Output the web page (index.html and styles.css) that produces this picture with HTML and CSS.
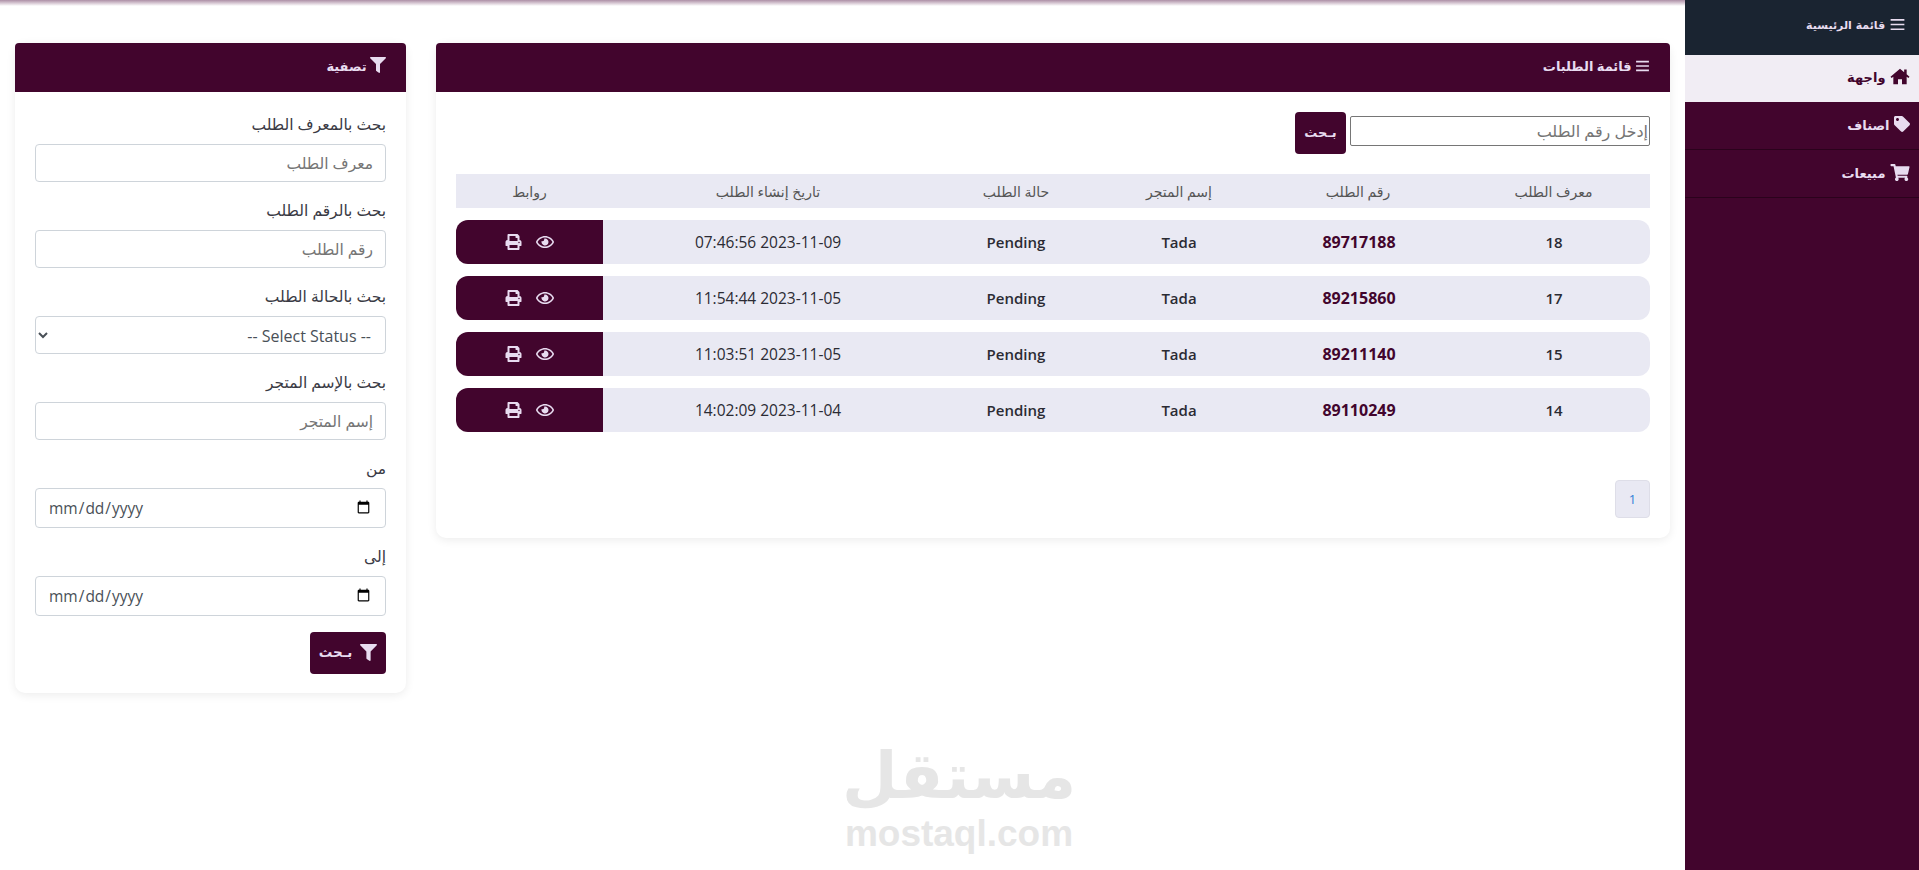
FILE: index.html
```html
<!DOCTYPE html>
<html lang="ar" dir="rtl">
<head>
  <meta charset="UTF-8">
  <title>قائمة الطلبات</title>
  <link rel="stylesheet" href="styles.css">
</head>
<body>
  <svg class="sprite" xmlns="http://www.w3.org/2000/svg">
    <symbol id="i-bars" viewBox="0 0 24 24"><path d="M1 4.5h22M1 12h22M1 19.5h22" stroke="currentColor" stroke-width="2.6" fill="none"/></symbol>
    <symbol id="i-home" viewBox="0 0 24 20"><path fill="currentColor" d="M12 .6 .6 10.4l1.3 1.5L4 10.2V19.4h5.6v-6h4.8v6H20v-9.2l2.1 1.7 1.3-1.5L20 7.4V1.6h-3v3.2z"/></symbol>
    <symbol id="i-tag" viewBox="0 0 512 512"><path fill="currentColor" d="M0 252.118V48C0 21.49 21.49 0 48 0h204.118a48 48 0 0 1 33.941 14.059l211.882 211.882c18.745 18.745 18.745 49.137 0 67.882L293.823 497.941c-18.745 18.745-49.137 18.745-67.882 0L14.059 286.059A48 48 0 0 1 0 252.118zM112 64c-26.51 0-48 21.49-48 48s21.49 48 48 48 48-21.49 48-48-21.49-48-48-48z"/></symbol>
    <symbol id="i-cart" viewBox="0 0 576 512"><path fill="currentColor" d="M528.12 301.319l47.273-208C578.806 78.301 567.391 64 551.99 64H159.208l-9.166-44.81C147.758 8.021 137.93 0 126.529 0H24C10.745 0 0 10.745 0 24v16c0 13.255 10.745 24 24 24h69.883l70.248 343.435C147.325 417.1 136 435.222 136 456c0 30.928 25.072 56 56 56s56-25.072 56-56c0-15.674-6.447-29.835-16.824-40h209.647C430.447 426.165 424 440.326 424 456c0 30.928 25.072 56 56 56s56-25.072 56-56c0-22.172-12.888-41.332-31.579-50.405l5.517-24.276c3.413-15.018-8.002-29.319-23.403-29.319H218.117l-6.545-32h293.145c11.206 0 20.92-7.754 23.403-18.681z"/></symbol>
    <symbol id="i-filter" viewBox="0 0 512 512"><path fill="currentColor" d="M487.976 0H24.028C2.71 0-8.047 25.866 7.058 40.971L192 225.941V432c0 7.831 3.821 15.17 10.237 19.662l80 55.98C298.02 518.69 320 507.493 320 487.98V225.941l184.947-184.97C520.021 25.896 509.338 0 487.976 0z"/></symbol>
    <symbol id="i-print" viewBox="0 0 512 512"><path fill="currentColor" d="M448 192V77.25c0-8.49-3.37-16.62-9.37-22.63L393.37 9.37c-6-6-14.14-9.37-22.63-9.37H96C78.33 0 64 14.33 64 32v160c-35.35 0-64 28.65-64 64v112c0 8.84 7.16 16 16 16h48v96c0 17.67 14.33 32 32 32h320c17.67 0 32-14.33 32-32v-96h48c8.84 0 16-7.16 16-16V256c0-35.35-28.65-64-64-64zm-64 256H128v-96h256v96zm0-224H128V64h192v48c0 8.84 7.16 16 16 16h48v96zm48 72c-13.25 0-24-10.75-24-24 0-13.26 10.75-24 24-24s24 10.74 24 24c0 13.25-10.75 24-24 24z"/></symbol>
    <symbol id="i-eye" viewBox="0 0 576 512"><path fill="currentColor" d="M288 144a110.94 110.94 0 0 0-31.24 5 55.4 55.4 0 0 1 7.24 27 56 56 0 0 1-56 56 55.4 55.4 0 0 1-27-7.24A111.71 111.71 0 1 0 288 144zm284.52 97.4C518.29 135.59 410.93 64 288 64S57.68 135.64 3.48 241.41a32.35 32.35 0 0 0 0 29.19C57.71 376.41 165.07 448 288 448s230.32-71.64 284.52-177.41a32.35 32.35 0 0 0 0-29.19zM288 400c-98.65 0-189.09-55-237.93-144C98.91 167 189.34 112 288 112s189.09 55 237.93 144C477.1 345 386.66 400 288 400z"/></symbol>
  </svg>

  <div class="topline"></div>

  <div class="layout">
    <aside class="sidebar">
      <div class="side-title"><svg class="icon icon-bars"><use href="#i-bars"/></svg> قائمة الرئيسية</div>
      <a class="side-link active"><svg class="icon icon-home"><use href="#i-home"/></svg> واجهة</a>
      <a class="side-link"><svg class="icon"><use href="#i-tag"/></svg> اصناف</a>
      <a class="side-link"><svg class="icon icon-home"><use href="#i-cart"/></svg> مبيعات</a>
    </aside>

    <main class="content">
      <section class="card orders">
        <div class="card-head"><svg class="icon icon-head"><use href="#i-bars"/></svg> قائمة الطلبات</div>
        <div class="card-body">
          <form class="quick-search">
            <input type="text" class="quick-input" placeholder="إدخل رقم الطلب">
            <button type="button" class="btn btn-quick">بـحث</button>
          </form>

          <table class="orders-table">
            <colgroup>
              <col class="c-id"><col class="c-num"><col class="c-store"><col class="c-status"><col class="c-date"><col class="c-links">
            </colgroup>
            <thead>
              <tr><th>معرف الطلب</th><th>رقم الطلب</th><th>إسم المتجر</th><th>حالة الطلب</th><th>تاريخ إنشاء الطلب</th><th>روابط</th></tr>
            </thead>
            <tbody>
              <tr>
                <td>18</td><td class="num">89717188</td><td>Tada</td><td>Pending</td><td class="date">2023-11-09 07:46:56</td>
                <td class="links"><div class="link-icons"><svg class="icon icon-eye"><use href="#i-eye"/></svg><svg class="icon icon-print"><use href="#i-print"/></svg></div></td>
              </tr>
              <tr>
                <td>17</td><td class="num">89215860</td><td>Tada</td><td>Pending</td><td class="date">2023-11-05 11:54:44</td>
                <td class="links"><div class="link-icons"><svg class="icon icon-eye"><use href="#i-eye"/></svg><svg class="icon icon-print"><use href="#i-print"/></svg></div></td>
              </tr>
              <tr>
                <td>15</td><td class="num">89211140</td><td>Tada</td><td>Pending</td><td class="date">2023-11-05 11:03:51</td>
                <td class="links"><div class="link-icons"><svg class="icon icon-eye"><use href="#i-eye"/></svg><svg class="icon icon-print"><use href="#i-print"/></svg></div></td>
              </tr>
              <tr>
                <td>14</td><td class="num">89110249</td><td>Tada</td><td>Pending</td><td class="date">2023-11-04 14:02:09</td>
                <td class="links"><div class="link-icons"><svg class="icon icon-eye"><use href="#i-eye"/></svg><svg class="icon icon-print"><use href="#i-print"/></svg></div></td>
              </tr>
            </tbody>
          </table>

          <div class="pager"><a class="page-num">1</a></div>
        </div>
      </section>

      <section class="card filter">
        <div class="card-head"><svg class="icon"><use href="#i-filter"/></svg> تصفية</div>
        <form class="card-body filter-body">
          <label class="field-label">بحث بالمعرف الطلب</label>
          <input type="text" class="field" placeholder="معرف الطلب">
          <label class="field-label">بحث بالرقم الطلب</label>
          <input type="text" class="field" placeholder="رقم الطلب">
          <label class="field-label">بحث بالحالة الطلب</label>
          <select class="field field-select"><option>-- Select Status --</option></select>
          <label class="field-label">بحث بالإسم المتجر</label>
          <input type="text" class="field" placeholder="إسم المتجر">
          <label class="field-label">من</label>
          <input type="date" class="field field-date">
          <label class="field-label">إلى</label>
          <input type="date" class="field field-date">
          <button type="button" class="btn btn-filter"><svg class="icon"><use href="#i-filter"/></svg> بـحث</button>
        </form>
      </section>
    </main>
  </div>

  <div class="watermark">
    <span class="wm-ar">مستقل</span>
    <span class="wm-en">mostaql.com</span>
  </div>
</body>
</html>
```

FILE: styles.css
```css
* { box-sizing: border-box; }
html, body { height: 100%; }
body {
  margin: 0;
  background: #fff;
  color: #212529;
  font-family: "Open Sans", "DejaVu Sans", sans-serif;
  font-size: 15px;
  overflow: hidden;
}
.sprite { display: none; }
.icon { width: 16px; height: 16px; fill: currentColor; vertical-align: -2px; flex: none; }

.topline {
  position: absolute;
  top: 0; left: 0; right: 0;
  height: 6px;
  background: linear-gradient(#ad8fa6, #fff);
  z-index: 2;
}
.layout { display: flex; height: 100%; }

/* sidebar */
.sidebar { width: 234px; flex: none; background: #42052d; position: relative; z-index: 3; }
.side-title {
  height: 55px;
  background: #1a2431;
  color: #e8dcf0;
  font-family: "DejaVu Sans", sans-serif;
  font-weight: bold;
  font-size: 11px;
  padding: 17px 13px 0 0;
}
.icon-bars { width: 17px; height: 15px; vertical-align: -3px; }
.side-link {
  display: block;
  height: 48px;
  padding: 14px 9px 0 0;
  color: #e8dcf0;
  font-family: "DejaVu Sans", sans-serif;
  font-weight: bold;
  font-size: 13px;
  border-bottom: 1px solid #2b021c;
}
.side-link.active { background: #f1edf4; color: #42052d; height: 47px; padding-top: 13px; border-bottom: 0; }
.icon-home { width: 20px; height: 17px; vertical-align: -3px; }

/* main area */
.content { flex: 1; display: flex; align-items: flex-start; gap: 30px; padding: 43px 15px 0; }
.card { background: #fff; border-radius: 10px; box-shadow: 0 2px 10px rgba(0, 0, 0, .08); }
.orders { width: 1234px; height: 495px; }
.filter { width: 391px; height: 650px; }
.card-head {
  height: 49px;
  background: #42052d;
  color: #e8dcf0;
  border-radius: 4px 4px 0 0;
  padding: 14px 20px 0;
  font-size: 13px;
  font-weight: 600;
}
.icon-head { width: 15px; height: 14px; }
.card-body { padding: 20px; }

/* quick search */
.quick-search { display: flex; gap: 4px; height: 42px; align-items: flex-start; }
.quick-input {
  width: 300px;
  height: 30px;
  margin-top: 4px;
  border: 1px solid #767676;
  border-radius: 2px;
  padding: 0 1px;
  font: inherit;
  font-size: 16px;
}
.quick-input::placeholder, .field::placeholder { color: #757575; }
.btn { border: 0; border-radius: 4px; background: #42052d; color: #e8dcf0; font-family: inherit; font-weight: 600; }
.btn-quick { width: 51px; height: 42px; font-size: 13px; padding: 0 0 2px; }

/* table */
.orders-table {
  width: 1194px;
  margin-top: 8px;
  border-collapse: separate;
  border-spacing: 0 12px;
  table-layout: fixed;
  text-align: center;
}
.c-id { width: 193px; }
.c-num { width: 198px; }
.c-store { width: 160px; }
.c-status { width: 166px; }
.c-date { width: 330px; }
.c-links { width: 147px; }
.orders-table th { height: 34px; padding: 0; background: #e9e9f3; font-weight: 400; font-size: 14px; color: #555; }
.orders-table td { height: 44px; padding: 0; background: #e9e9f3; font-weight: 600; font-size: 15px; color: #2b2b33; }
.orders-table td:first-child { border-radius: 0 12px 12px 0; padding-left: 1px; }
.orders-table td.num { color: #42052d; font-weight: 700; font-size: 16px; padding-left: 2px; }
.orders-table td.date { font-weight: 500; font-size: 15.5px; }
.orders-table td.links { background: #42052d; color: #e8dcf0; border-radius: 12px 0 0 12px; }
.link-icons { display: flex; justify-content: center; align-items: center; gap: 14px; }
.icon-eye { width: 18px; height: 16px; }
.icon-print { width: 17px; height: 16px; }

.pager { display: flex; margin-top: 36px; }
.page-num {
  width: 35px;
  height: 38px;
  display: flex;
  align-items: center;
  justify-content: center;
  background: #e9e9f3;
  border: 1px solid #dedee8;
  border-radius: 4px;
  color: #2f80d8;
  font-size: 13px;
}

/* filter form */
.filter-body { display: flex; flex-direction: column; }
.field-label { height: 20px; margin-bottom: 12px; font-size: 15.5px; color: #3a3a44; line-height: 25px; }
.field {
  width: 351px;
  height: 38px;
  margin-bottom: 16px;
  padding: 0 12px;
  border: 1px solid #ced4da;
  border-radius: 4px;
  background: #fff;
  font-family: inherit;
  font-size: 15.5px;
  color: #495057;
}
.field-date { height: 40px; }
.field-select { padding-right: 10px; padding-top: 1px; font-size: 16px; }
.btn-filter {
  align-self: flex-start;
  width: 76px;
  height: 42px;
  font-size: 13.5px;
  padding: 0 0 2px;
  display: flex;
  align-items: center;
  justify-content: center;
  gap: 8px;
}
.btn-filter .icon { width: 17px; height: 17px; }

/* watermark */
.watermark {
  position: absolute;
  left: 844px;
  top: 737px;
  width: 230px;
  display: flex;
  flex-direction: column;
  align-items: center;
  color: #e6e6e6;
  font-family: "DejaVu Sans", sans-serif;
  font-weight: bold;
  pointer-events: none;
}
.wm-ar { font-size: 64px; line-height: 78px; }
.wm-en { font-family: "Liberation Sans", sans-serif; font-size: 37px; line-height: 38px; }
```
